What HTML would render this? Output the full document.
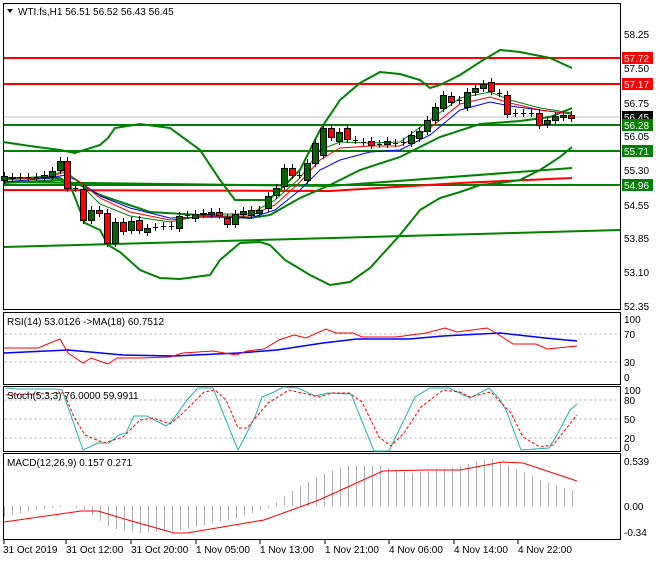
<!DOCTYPE html>
<html><head><meta charset="utf-8"><style>
body{margin:0;background:#fff;width:660px;height:560px;overflow:hidden;font-family:"Liberation Sans",sans-serif}
svg text{font-family:"Liberation Sans",sans-serif;font-size:10px;fill:#000}
</style></head><body>
<svg id="s" width="660" height="560" xmlns="http://www.w3.org/2000/svg">
<rect x="0" y="0" width="660" height="560" fill="#fff"/>
<!-- panels -->
<rect x="3.5" y="3.5" width="617" height="306" fill="none" stroke="#000"/>
<rect x="3.5" y="312.5" width="617" height="72" fill="none" stroke="#000"/>
<rect x="3.5" y="386.5" width="617" height="65" fill="none" stroke="#000"/>
<rect x="3.5" y="453.5" width="617" height="86" fill="none" stroke="#000"/>
<!-- main lines -->
<line x1="4" y1="117" x2="620" y2="117" stroke="#c0c0c0"/>
<line x1="4" y1="58" x2="620" y2="58" stroke="#f00" stroke-width="2"/>
<line x1="4" y1="84" x2="620" y2="84" stroke="#f00" stroke-width="2"/>
<line x1="4" y1="125" x2="620" y2="125" stroke="#008000" stroke-width="2"/>
<line x1="4" y1="151" x2="620" y2="151" stroke="#008000" stroke-width="2"/>
<line x1="4" y1="185" x2="620" y2="185" stroke="#008000" stroke-width="2"/>
<line x1="4" y1="247" x2="620" y2="230" stroke="#008000" stroke-width="2"/>
<polyline fill="none" stroke="#008000" stroke-width="2" points="4,182 330,186 572,168"/>
<polyline fill="none" stroke="#f00" stroke-width="2" points="4,190 330,191 460,183 572,178"/>
<polyline fill="none" stroke="#008000" stroke-width="2" points="3,142 30,146 60,150 75,153 100,145 108,138 115,128 140,124 170,128 200,150 220,180 235,200 268,200 280,190 300,170 320,130 340,100 360,83 380,72 400,74 420,80 430,88 440,85 460,75 480,62 500,50 520,52 550,58 572,68"/>
<polyline fill="none" stroke="#008000" stroke-width="2" points="3,178 30,178 60,178 70,185 85,223 100,230 108,245 120,252 140,270 160,278 180,279 210,275 220,260 240,243 260,242 270,245 285,260 310,275 330,285 350,282 370,268 400,235 420,210 440,198 460,192 480,185 500,183 520,180 540,170 560,157 572,147"/>
<polyline fill="none" stroke="#008000" stroke-width="2" points="3,183 60,180 80,185 100,195 150,212 200,215 250,218 270,215 300,198 330,185 360,170 400,157 440,137 480,124 520,121 550,117 572,108"/>
<polyline fill="none" stroke="#00f" points="4,182 50,178 65,175 80,182 100,196 130,208 170,218 210,217 250,218 275,210 300,190 320,170 340,160 370,152 400,150 430,135 460,110 490,102 510,106 540,110 572,114"/>
<polyline fill="none" stroke="#f00" points="4,180 50,177 65,172 80,182 100,198 130,212 170,220 210,216 250,216 275,205 300,182 320,160 340,148 370,146 400,146 430,128 460,104 490,97 510,103 540,110 572,114"/>
<polyline fill="none" stroke="#008000" points="4,179 50,176 65,170 80,184 100,204 130,216 170,222 210,214 250,214 275,200 300,178 320,150 340,142 370,143 400,142 430,120 460,98 490,92 510,100 540,108 572,113"/>
<g id="candles"></g>
<!-- axis labels main -->
<g>
<text x="624" y="38">58.25</text><text x="624" y="72">57.50</text><text x="624" y="107">56.75</text>
<text x="624" y="140">56.05</text><text x="624" y="174">55.30</text><text x="624" y="209">54.55</text>
<text x="624" y="242">53.85</text><text x="624" y="276">53.10</text><text x="624" y="310">52.35</text>
<rect x="622" y="52" width="31" height="12" fill="#f00"/><text x="624" y="62" style="fill:#fff">57.72</text>
<rect x="622" y="78" width="31" height="12" fill="#f00"/><text x="624" y="88" style="fill:#fff">57.17</text>
<rect x="622" y="111" width="31" height="12" fill="#000"/><text x="624" y="121" style="fill:#fff">56.45</text>
<rect x="622" y="119" width="31" height="12" fill="#008000"/><text x="624" y="129" style="fill:#fff">56.28</text>
<rect x="622" y="145" width="31" height="12" fill="#008000"/><text x="624" y="155" style="fill:#fff">55.71</text>
<rect x="622" y="179" width="31" height="12" fill="#008000"/><text x="624" y="189" style="fill:#fff">54.96</text>
</g>
<polygon points="7,9 13,9 10,13" fill="#000"/>
<text x="18" y="15">WTI.fs,H1  56.51 56.52 56.43 56.45</text>
<!-- RSI -->
<line x1="4" y1="334" x2="620" y2="334" stroke="#c0c0c0" stroke-dasharray="3,2"/>
<line x1="4" y1="362" x2="620" y2="362" stroke="#c0c0c0" stroke-dasharray="3,2"/>
<polyline fill="none" stroke="#00f" stroke-width="1.5" points="4,353 68,350 123,355 174,356 238,353 277,350 323,343 357,339 409,339 443,336 500,333 545,338 577,341"/>
<polyline fill="none" stroke="#f00" points="4,348 38,348 60,339 68,353 83,363 91,358 108,364 117,358 140,358 170,357 183,353 213,351 236,355 247,351 264,349 279,340 294,335 306,338 326,329 336,333 353,333 362,337 396,337 426,333 445,328 457,332 487,328 496,333 513,344 536,344 547,349 577,346"/>
<text x="7" y="325">RSI(14) 53.0126  -&gt;MA(18) 60.7512</text>
<text x="624" y="323">100</text><text x="624" y="338">70</text><text x="624" y="366">30</text><text x="624" y="381">0</text>
<!-- Stoch -->
<line x1="4" y1="400" x2="620" y2="400" stroke="#c0c0c0" stroke-dasharray="3,2"/>
<line x1="4" y1="419" x2="620" y2="419" stroke="#c0c0c0" stroke-dasharray="3,2"/>
<line x1="4" y1="438" x2="620" y2="438" stroke="#c0c0c0" stroke-dasharray="3,2"/>
<polyline fill="none" stroke="#20b2aa" points="6,388 17,389 55,389 62,390 83,450 98,443 109,443 119,435 126,433 134,416 147,416 166,426 172,421 187,400 198,388 213,388 238,450 255,417 262,397 274,392 283,387 298,388 315,396 328,393 351,394 374,451 389,451 415,397 430,388 449,388 470,398 489,388 498,397 506,410 521,450 549,448 557,435 570,410 577,404"/>
<polyline fill="none" stroke="#f00" stroke-dasharray="3,2" points="6,395 64,393 74,417 85,435 104,443 123,437 140,420 153,418 170,424 183,413 204,392 215,390 226,400 238,428 247,428 268,403 289,390 319,397 332,393 349,393 362,402 379,437 391,446 404,433 421,407 443,390 460,392 470,397 491,392 511,413 523,437 540,447 553,445 577,415"/>
<text x="7" y="399">Stoch(5,3,3) 76.0000 59.9911</text>
<text x="624" y="394">100</text><text x="624" y="404">80</text><text x="624" y="423">50</text><text x="624" y="442">20</text><text x="624" y="451">0</text>
<!-- MACD -->
<g id="hist"></g>
<polyline fill="none" stroke="#f00" points="4,522 81,511 98,511 128,520 174,533 187,533 264,520 319,500 383,471 426,470 460,470 502,462 523,463 577,481"/>
<text x="7" y="466">MACD(12,26,9) 0.157 0.271</text>
<text x="624" y="465">0.539</text><text x="624" y="510">0.00</text><text x="624" y="536">-0.34</text>
<!-- time axis -->
<g stroke="#000">
<line x1="4" y1="540" x2="4" y2="544"/><line x1="66" y1="540" x2="66" y2="544"/><line x1="131" y1="540" x2="131" y2="544"/>
<line x1="196" y1="540" x2="196" y2="544"/><line x1="260" y1="540" x2="260" y2="544"/><line x1="325" y1="540" x2="325" y2="544"/>
<line x1="389" y1="540" x2="389" y2="544"/><line x1="454" y1="540" x2="454" y2="544"/><line x1="518" y1="540" x2="518" y2="544"/>
</g>
<text x="3" y="553">31 Oct 2019</text><text x="66" y="553">31 Oct 12:00</text><text x="131" y="553">31 Oct 20:00</text>
<text x="196" y="553">1 Nov 05:00</text><text x="260" y="553">1 Nov 13:00</text><text x="325" y="553">1 Nov 21:00</text>
<text x="389" y="553">4 Nov 06:00</text><text x="454" y="553">4 Nov 14:00</text><text x="518" y="553">4 Nov 22:00</text>
</svg>
<script>
var NS="http://www.w3.org/2000/svg";
function el(p,t,a){var e=document.createElementNS(NS,t);for(var k in a)e.setAttribute(k,a[k]);p.appendChild(e);return e;}
var C=[[4,180,176],[12,178,177],[20,177,177],[28,177,177],[36,177,177],[44,177,175],[52,176,171],[60,170,161],[67,161,188],[75,188,188],[83,189,220],[91,220,210],[99,210,213],[107,213,243],[115,243,222],[123,222,231],[131,230,221],[139,220,230],[147,232,228],[155,227,227],[163,226,226],[171,226,226],[179,228,216],[187,215,215],[195,218,214],[203,214,213],[211,214,212],[219,212,215],[227,218,224],[235,224,214],[243,214,211],[251,215,210],[259,213,210],[268,208,196],[276,195,188],[284,186,168],[292,168,175],[299,175,175],[307,180,163],[315,163,143],[323,155,128],[331,128,137],[339,141,132],[347,128,139],[355,140,140],[363,142,142],[371,141,145],[379,144,144],[387,144,141],[395,143,143],[403,142,142],[411,143,135],[419,138,131],[427,131,120],[435,120,107],[443,108,95],[451,96,102],[459,100,100],[467,107,92],[475,92,88],[483,88,84],[491,82,91],[499,93,93],[507,95,114],[515,113,113],[523,113,113],[531,113,113],[539,113,125],[547,124,120],[555,120,116],[563,117,115],[571,115,118]];
var g=document.getElementById("candles");
C.forEach(function(c){var x=c[0],o=c[1],cl=c[2],t=Math.min(o,cl),b=Math.max(o,cl);
el(g,"line",{x1:x+0.5,y1:t-4,x2:x+0.5,y2:b+4,stroke:"#000"});
if(b-t<1){el(g,"line",{x1:x-2,y1:t+0.5,x2:x+3,y2:t+0.5,stroke:"#000"});}
else el(g,"rect",{x:x-2.5,y:t+0.5,width:6,height:b-t,fill:cl<o?"#006400":"#f00",stroke:"#000"});});
var P=[[4,517],[40,509],[70,506],[85,510],[110,528],[140,533],[180,530],[230,520],[270,507],[290,492],[320,475],[345,466],[380,466],[410,473],[440,470],[460,466],[490,458],[510,466],[540,480],[577,492]];
function f(x){for(var i=0;i<P.length-1;i++){if(x<=P[i+1][0]){var a=P[i],b=P[i+1];return a[1]+(b[1]-a[1])*(x-a[0])/(b[0]-a[0]);}}return P[P.length-1][1];}
var h=document.getElementById("hist");
for(var x=4;x<=577;x+=8){el(h,"line",{x1:x+0.5,y1:506,x2:x+0.5,y2:f(x),stroke:"#b0b0b0"});}
</script>
</body></html>
